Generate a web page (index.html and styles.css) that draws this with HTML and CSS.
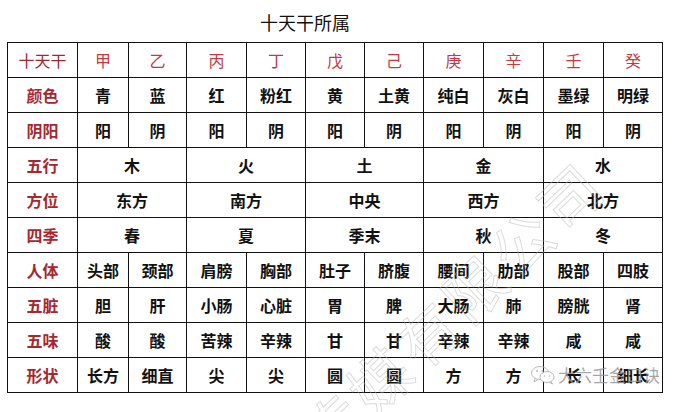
FILE: index.html
```html
<!DOCTYPE html>
<html lang="zh">
<head>
<meta charset="utf-8">
<title>十天干所属</title>
<link rel="stylesheet" href="styles.css">
</head>
<body>
<div class="page">
  <div class="title">十天干所属</div>
  <table class="tg">
    <colgroup>
      <col class="c0"><col class="c1"><col class="c2"><col class="c3"><col class="c4"><col class="c5"><col class="c6"><col class="c7"><col class="c8"><col class="c9"><col class="c10">
    </colgroup>
    <tr class="head"><th>十天干</th><td>甲</td><td>乙</td><td>丙</td><td>丁</td><td>戊</td><td>己</td><td>庚</td><td>辛</td><td>壬</td><td>癸</td></tr>
    <tr><th>颜色</th><td>青</td><td>蓝</td><td>红</td><td>粉红</td><td>黄</td><td>土黄</td><td>纯白</td><td>灰白</td><td>墨绿</td><td>明绿</td></tr>
    <tr><th>阴阳</th><td>阳</td><td>阴</td><td>阳</td><td>阴</td><td>阳</td><td>阴</td><td>阳</td><td>阴</td><td>阳</td><td>阴</td></tr>
    <tr><th>五行</th><td colspan="2">木</td><td colspan="2">火</td><td colspan="2">土</td><td colspan="2">金</td><td colspan="2">水</td></tr>
    <tr><th>方位</th><td colspan="2">东方</td><td colspan="2">南方</td><td colspan="2">中央</td><td colspan="2">西方</td><td colspan="2">北方</td></tr>
    <tr><th>四季</th><td colspan="2">春</td><td colspan="2">夏</td><td colspan="2">季末</td><td colspan="2">秋</td><td colspan="2">冬</td></tr>
    <tr><th>人体</th><td>头部</td><td>颈部</td><td>肩膀</td><td>胸部</td><td>肚子</td><td>脐腹</td><td>腰间</td><td>肋部</td><td>股部</td><td>四肢</td></tr>
    <tr><th>五脏</th><td>胆</td><td>肝</td><td>小肠</td><td>心脏</td><td>胃</td><td>脾</td><td>大肠</td><td>肺</td><td>膀胱</td><td>肾</td></tr>
    <tr><th>五味</th><td>酸</td><td>酸</td><td>苦辣</td><td>辛辣</td><td>甘</td><td>甘</td><td>辛辣</td><td>辛辣</td><td>咸</td><td>咸</td></tr>
    <tr><th>形状</th><td>长方</td><td>细直</td><td>尖</td><td>尖</td><td>圆</td><td>圆</td><td>方</td><td>方</td><td>长</td><td>细长</td></tr>
  </table>
  <div class="wm-big">传媒有限公司</div>
  <div class="wm-small">
    <svg class="wx" viewBox="0 0 26 20" width="26" height="20">
      <ellipse cx="10" cy="8" rx="8.5" ry="6.5" fill="none" stroke="#b8b8b8" stroke-width="1"/>
      <path d="M5 13.5 L4 17 L8 14.5" fill="none" stroke="#b8b8b8" stroke-width="1"/>
      <ellipse cx="17" cy="12" rx="7" ry="5.5" fill="#fff" stroke="#b8b8b8" stroke-width="1"/>
      <path d="M21 16.5 L22.5 19 L19 17.3" fill="none" stroke="#b8b8b8" stroke-width="1"/>
      <circle cx="7" cy="6" r="1" fill="#b8b8b8"/>
      <circle cx="12.5" cy="6" r="1" fill="#b8b8b8"/>
      <circle cx="14.5" cy="11" r="0.8" fill="#b8b8b8"/>
      <circle cx="19.5" cy="11" r="0.8" fill="#b8b8b8"/>
    </svg>
    <span class="wm-text">大六壬金口诀</span>
  </div>
</div>
</body>
</html>
```
FILE: styles.css
```css
html, body {
  margin: 0;
  padding: 0;
  background: #ffffff;
}
.page {
  position: relative;
  width: 681px;
  height: 412px;
  overflow: hidden;
  padding: 10px 0 0 7px;
  box-sizing: border-box;
  font-family: "Noto Sans CJK SC", "Noto Sans", sans-serif;
}
.title {
  height: 24px;
  line-height: 24px;
  font-size: 18px;
  color: #111;
  padding-left: 253px;
  margin-bottom: 8px;
}
.tg {
  border-collapse: collapse;
  table-layout: fixed;
  width: 655px;
}
.c0 { width: 70px; }
.c1 { width: 51px; }
.c2 { width: 58px; }
.c3 { width: 60px; }
.c4 { width: 59px; }
.c5 { width: 59px; }
.c6 { width: 59px; }
.c7 { width: 60px; }
.c8 { width: 60px; }
.c9 { width: 60px; }
.c10 { width: 59px; }
.tg tr { height: 35px; }
.tg th, .tg td {
  border: 1px solid #111;
  padding: 0;
  text-align: center;
  vertical-align: middle;
  font-size: 16px;
  line-height: 20px;
  white-space: nowrap;
}
.tg td {
  color: #111;
  font-weight: 600;
}
.tg th {
  color: #a8262e;
  font-weight: 700;
}
.tg .head td {
  color: #c23a44;
  font-weight: 400;
}
.tg .head th {
  color: #9c2a30;
  font-weight: 400;
}
.wm-big {
  position: absolute;
  left: 278px;
  top: 414px;
  font-size: 60px;
  letter-spacing: 6px;
  color: transparent;
  -webkit-text-stroke: 1px rgba(175, 175, 175, 0.45);
  transform: rotate(-44deg);
  transform-origin: left top;
  white-space: nowrap;
  pointer-events: none;
}
.wm-small {
  position: absolute;
  left: 530px;
  top: 364px;
  display: flex;
  align-items: center;
  gap: 2px;
}
.wm-text {
  font-size: 17px;
  line-height: 22px;
  color: rgba(150, 150, 150, 0.85);
}
```
